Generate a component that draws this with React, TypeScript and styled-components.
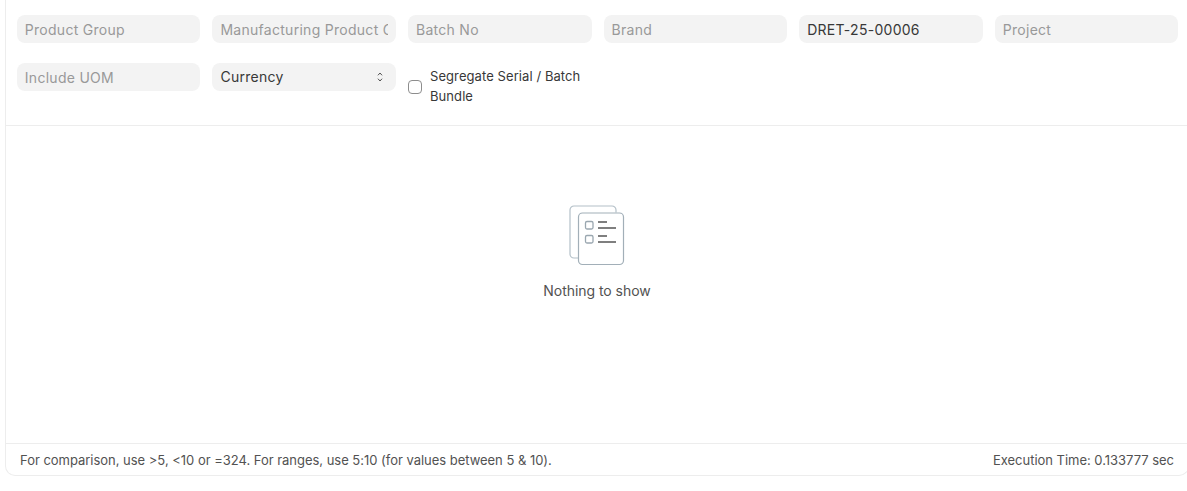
import React from "react";
import styled, { createGlobalStyle } from "styled-components";

const Global = createGlobalStyle`
  html, body { margin: 0; padding: 0; background: #fff; }
  body { font-family: Inter, "Liberation Sans", sans-serif; color: #383838; overflow: hidden; width: 1187px; height: 491px; }
`;

const Page = styled.div`
  width: 1189px;
  height: 491px;
  padding: 0 0 15px 5px;
  box-sizing: border-box;
`;

const Report = styled.div`
  height: 100%;
  box-sizing: border-box;
  display: flex;
  flex-direction: column;
  border-left: 1px solid #ededed;
  border-right: 1px solid #ededed;
  border-bottom: 1px solid #ededed;
  border-radius: 0 0 10px 10px;
`;

const Filters = styled.div`
  height: 126px;
  box-sizing: border-box;
  flex: none;
  display: grid;
  grid-template-columns: repeat(6, 183.6px);
  grid-auto-rows: 28px;
  column-gap: 12px;
  row-gap: 20px;
  padding: 15px 0 0 10.8px;
  border-bottom: 1px solid #ededed;
`;

const Field = styled.input`
  width: 100%;
  min-width: 0;
  height: 28px;
  box-sizing: border-box;
  border: 0;
  outline: 0;
  border-radius: 8px;
  background: #f3f3f3;
  padding: 1px 8px 0 8px;
  font: 400 14px/27px Inter, "Liberation Sans", sans-serif;
  letter-spacing: 0.02em;
  color: #383838;
  &::placeholder { color: #999; opacity: 1; }
`;

const SelectBox = styled.div`
  height: 28px;
  box-sizing: border-box;
  border-radius: 8px;
  background: #f3f3f3;
  padding: 0 13px 2px 8px;
  display: flex;
  align-items: center;
  justify-content: space-between;
  font-size: 14px;
  letter-spacing: 0.02em;
  color: #383838;
`;

const StepperIcon = styled.svg`
  margin-top: 2px;
  flex: none;
`;

const CheckField = styled.label`
  display: flex;
  align-items: center;
  gap: 8px;
  align-self: start;
  padding-top: 3px;
  font-size: 13px;
  line-height: 20px;
  letter-spacing: 0.08px;
  color: #383838;
`;

const CheckBox = styled.span`
  flex: none;
  width: 14px;
  height: 14px;
  margin-top: 1px;
  box-sizing: border-box;
  border: 1px solid #8d8d8d;
  border-radius: 4px;
  background: #fff;
`;

const Empty = styled.div`
  flex: 1;
  display: flex;
  flex-direction: column;
  align-items: center;
  padding-top: 79px;
  gap: 16px;
  color: #525252;
  font-size: 14px;
  letter-spacing: -0.05px;
`;

const Foot = styled.div`
  flex: none;
  height: 32px;
  box-sizing: border-box;
  border-top: 1px solid #ededed;
  padding: 0 14px;
  display: flex;
  align-items: center;
  justify-content: space-between;
  font-size: 13px;
  letter-spacing: -0.024px;
  color: #525252;
`;

const Stepper = () => (
  <StepperIcon width="6" height="10" viewBox="0 0 6 10" fill="none" stroke="#525252" strokeWidth="1" strokeLinecap="round" strokeLinejoin="round">
    <path d="M1.2 3 3 1 4.8 3" />
    <path d="M1.2 7 3 9 4.8 7" />
  </StepperIcon>
);

const EmptyIcon = () => (
  <svg width="56" height="61" viewBox="0 0 56 61" fill="none">
    <path d="M47 7.5V5a4 4 0 0 0-4-4H5a4 4 0 0 0-4 4v44a4 4 0 0 0 4 4h4.5" stroke="#b4c0c8" strokeWidth="1.2" />
    <rect x="9.5" y="8" width="45" height="51.5" rx="4" fill="#fff" stroke="#a2afb8" strokeWidth="1.2" />
    <rect x="16.5" y="16.5" width="7.5" height="7.5" rx="1.5" stroke="#9aa7b0" strokeWidth="1.3" />
    <rect x="16.5" y="30.5" width="7.5" height="7.5" rx="1.5" stroke="#9aa7b0" strokeWidth="1.3" />
    <path d="M29 17h9M29 23h18M29 31h9M29 37h18" stroke="#555" strokeWidth="1.3" />
  </svg>
);

export default function App() {
  return (
    <Page>
      <Global />
      <Report>
        <Filters>
          <Field placeholder="Product Group" readOnly />
          <Field placeholder="Manufacturing Product Group" readOnly />
          <Field placeholder="Batch No" readOnly />
          <Field placeholder="Brand" readOnly />
          <Field value="DRET-25-00006" readOnly />
          <Field placeholder="Project" readOnly />
          <Field placeholder="Include UOM" readOnly />
          <SelectBox>
            Currency
            <Stepper />
          </SelectBox>
          <CheckField>
            <CheckBox />
            <span>Segregate Serial / Batch Bundle</span>
          </CheckField>
        </Filters>
        <Empty>
          <EmptyIcon />
          <span>Nothing to show</span>
        </Empty>
        <Foot>
          <span>For comparison, use &gt;5, &lt;10 or =324. For ranges, use 5:10 (for values between 5 &amp; 10).</span>
          <span>Execution Time: 0.133777 sec</span>
        </Foot>
      </Report>
    </Page>
  );
}
